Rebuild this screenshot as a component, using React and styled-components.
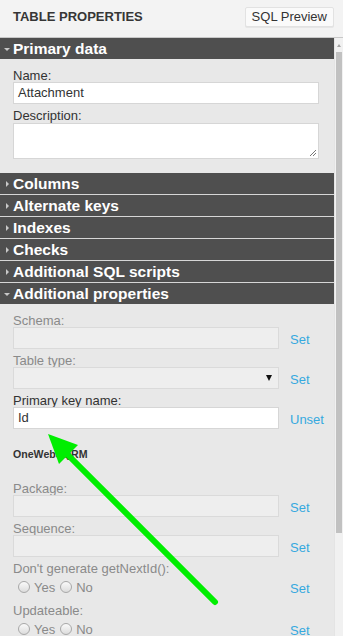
import React from "react";
import styled, { createGlobalStyle } from "styled-components";

const Global = createGlobalStyle`
  html, body { margin: 0; padding: 0; background: #e8e8e8; }
  body { font-family: "Liberation Sans", Arial, sans-serif; overflow: hidden; }
  * { box-sizing: border-box; }
`;

const Page = styled.div`
  position: relative;
  width: 343px;
  height: 636px;
  overflow: hidden;
  display: flex;
  flex-direction: column;
  background: #e8e8e8;
`;

const TopBar = styled.div`
  height: 38px;
  flex: none;
  display: flex;
  align-items: flex-start;
  justify-content: space-between;
  padding: 7px 9px 0 13px;
  background: #f3f3f3;
  border-bottom: 1px solid #c8c8c8;
`;

const Title = styled.div`
  font-size: 13px;
  font-weight: bold;
  color: #363636;
  line-height: 19px;
`;

const PreviewButton = styled.button`
  height: 20px;
  padding: 0 6px;
  font-family: inherit;
  font-size: 13px;
  color: #333;
  background: #fafafa;
  border: 1px solid #e2e2e2;
  border-radius: 2px;
  box-shadow: 0 1px 0 #e6e6e6;
  line-height: 18px;
`;

const Main = styled.div`
  flex: 1;
  display: flex;
  min-height: 0;
`;

const Panel = styled.div`
  width: 334px;
  flex: none;
  display: flex;
  flex-direction: column;
  background: #e8e8e8;
`;

const SectionHead = styled.div`
  flex: none;
  display: flex;
  align-items: center;
  background: #4f4f4f;
  color: #fff;
  font-size: 15.5px;
  font-weight: bold;
  line-height: 21px;
  padding-left: 13px;
  position: relative;
  border-bottom: ${(p) => (p.$sep ? "1px solid #d6d6d6" : "none")};
  height: ${(p) => (p.$sep ? "22px" : "21px")};
`;

const Caret = styled.span`
  position: absolute;
  left: ${(p) => (p.$open ? "4px" : "6px")};
  top: ${(p) => (p.$open ? "10px" : "8px")};
  width: 0;
  height: 0;
  ${(p) =>
    p.$open
      ? `border-left: 3px solid transparent; border-right: 3px solid transparent; border-top: 3px solid #c8c8c8;`
      : `border-top: 3px solid transparent; border-bottom: 3px solid transparent; border-left: 3px solid #c8c8c8;`}
`;

const Body = styled.div`
  padding: ${(p) => p.$pad || "7px 15px 14px 13px"};
  display: flex;
  flex-direction: column;
`;

const Label = styled.div`
  font-size: 13px;
  line-height: 20px;
  height: 16px;
  color: ${(p) => (p.$disabled ? "#8a8a8a" : "#333")};
`;

const Row = styled.div`
  display: flex;
  align-items: center;
  margin-bottom: 2px;
`;

const TextBox = styled.div`
  height: 22px;
  width: ${(p) => p.$w || "306px"};
  flex: none;
  border: 1px solid ${(p) => (p.$disabled ? "#dadada" : "#d6d6d6")};
  background: ${(p) => (p.$disabled ? "#eeeeee" : "#fff")};
  font-size: 13px;
  color: #333;
  line-height: 20px;
  padding-left: 4px;
  margin-bottom: ${(p) => p.$mb || "0"};
  position: relative;
`;

const Area = styled.div`
  height: 36px;
  width: 306px;
  border: 1px solid #d6d6d6;
  background: #fff;
  position: relative;
  margin-top: 1px;
`;

const Grip = styled.svg`
  position: absolute;
  right: 1px;
  bottom: 1px;
`;

const SelectArrow = styled.span`
  position: absolute;
  right: 6px;
  top: 7px;
  width: 0;
  height: 0;
  border-left: 3.5px solid transparent;
  border-right: 3.5px solid transparent;
  border-top: 6px solid #111;
`;

const Link = styled.a`
  font-size: 13px;
  color: #36a9df;
  margin-left: 11px;
  padding-top: 3px;
  text-decoration: none;
`;

const SubHeading = styled.div`
  font-size: 10.6px;
  font-weight: bold;
  color: #333;
  line-height: 16px;
  padding: 15px 0 17px;
`;

const Radios = styled.div`
  width: 266px;
  height: 24px;
  display: flex;
  align-items: center;
  padding-left: 5px;
  font-size: 13px;
  color: #8a8a8a;
`;

const Radio = styled.span`
  width: 12px;
  height: 12px;
  border-radius: 50%;
  border: 1px solid #a8a8a8;
  background: linear-gradient(#fafafa, #dcdcdc);
  margin-right: 4px;
  margin-top: -1px;
  display: inline-block;
`;

const RadioText = styled.span`
  margin-right: 5px;
`;

const ScrollBar = styled.div`
  flex: 1;
  background: #f1f1f1;
  border-left: 1px solid #e4e4e4;
  display: flex;
  flex-direction: column;
  align-items: center;
`;

const ScrollUp = styled.div`
  height: 14px;
  flex: none;
  display: flex;
  align-items: center;
  justify-content: center;
  &::after {
    content: "";
    border-left: 2.5px solid transparent;
    border-right: 2.5px solid transparent;
    border-bottom: 3px solid #a3a3a3;
  }
`;

const Thumb = styled.div`
  width: 6px;
  height: 481px;
  background: #c1c1c1;
`;

const Overlay = styled.svg`
  position: absolute;
  left: 0;
  top: 0;
  pointer-events: none;
`;

function Field({ label, disabled, value, link, select }) {
  return (
    <>
      <Label $disabled={disabled}>{label}</Label>
      <Row>
        <TextBox $w="266px" $disabled={disabled}>
          {value}
          {select && <SelectArrow />}
        </TextBox>
        <Link href="#">{link}</Link>
      </Row>
    </>
  );
}

function RadioField({ label }) {
  return (
    <>
      <Label $disabled>{label}</Label>
      <Row>
        <Radios>
          <Radio />
          <RadioText>Yes</RadioText>
          <Radio />
          <RadioText>No</RadioText>
        </Radios>
        <Link href="#">Set</Link>
      </Row>
    </>
  );
}

export default function App() {
  const collapsed = ["Columns", "Alternate keys", "Indexes", "Checks", "Additional SQL scripts"];
  return (
    <Page>
      <Global />
      <TopBar>
        <Title>TABLE PROPERTIES</Title>
        <PreviewButton>SQL Preview</PreviewButton>
      </TopBar>
      <Main>
        <Panel>
          <SectionHead>
            <Caret $open />
            Primary data
          </SectionHead>
          <Body>
            <Label>Name:</Label>
            <TextBox $mb="2px">Attachment</TextBox>
            <Label>Description:</Label>
            <Area>
              <Grip width="8" height="8" viewBox="0 0 8 8">
                <path d="M7 1 L1 7 M7 4 L4 7" stroke="#777" strokeWidth="1" />
              </Grip>
            </Area>
          </Body>
          {collapsed.map((t) => (
            <SectionHead key={t} $sep>
              <Caret />
              {t}
            </SectionHead>
          ))}
          <SectionHead>
            <Caret $open />
            Additional properties
          </SectionHead>
          <Body $pad="7px 0 0 13px">
            <Field label="Schema:" disabled link="Set" />
            <Field label="Table type:" disabled link="Set" select />
            <Field label="Primary key name:" value="Id" link="Unset" />
            <SubHeading>OneWebSQRM</SubHeading>
            <Field label="Package:" disabled link="Set" />
            <Field label="Sequence:" disabled link="Set" />
            <RadioField label="Don't generate getNextId():" />
            <RadioField label="Updateable:" />
          </Body>
        </Panel>
        <ScrollBar>
          <ScrollUp />
          <Thumb />
        </ScrollBar>
      </Main>
      <Overlay width="343" height="636" viewBox="0 0 343 636">
        <line x1="215" y1="602" x2="62" y2="449" stroke="#00ee00" strokeWidth="6" strokeLinecap="round" />
        <polygon points="48,434 78,445 59,464" fill="#00ee00" />
      </Overlay>
    </Page>
  );
}
